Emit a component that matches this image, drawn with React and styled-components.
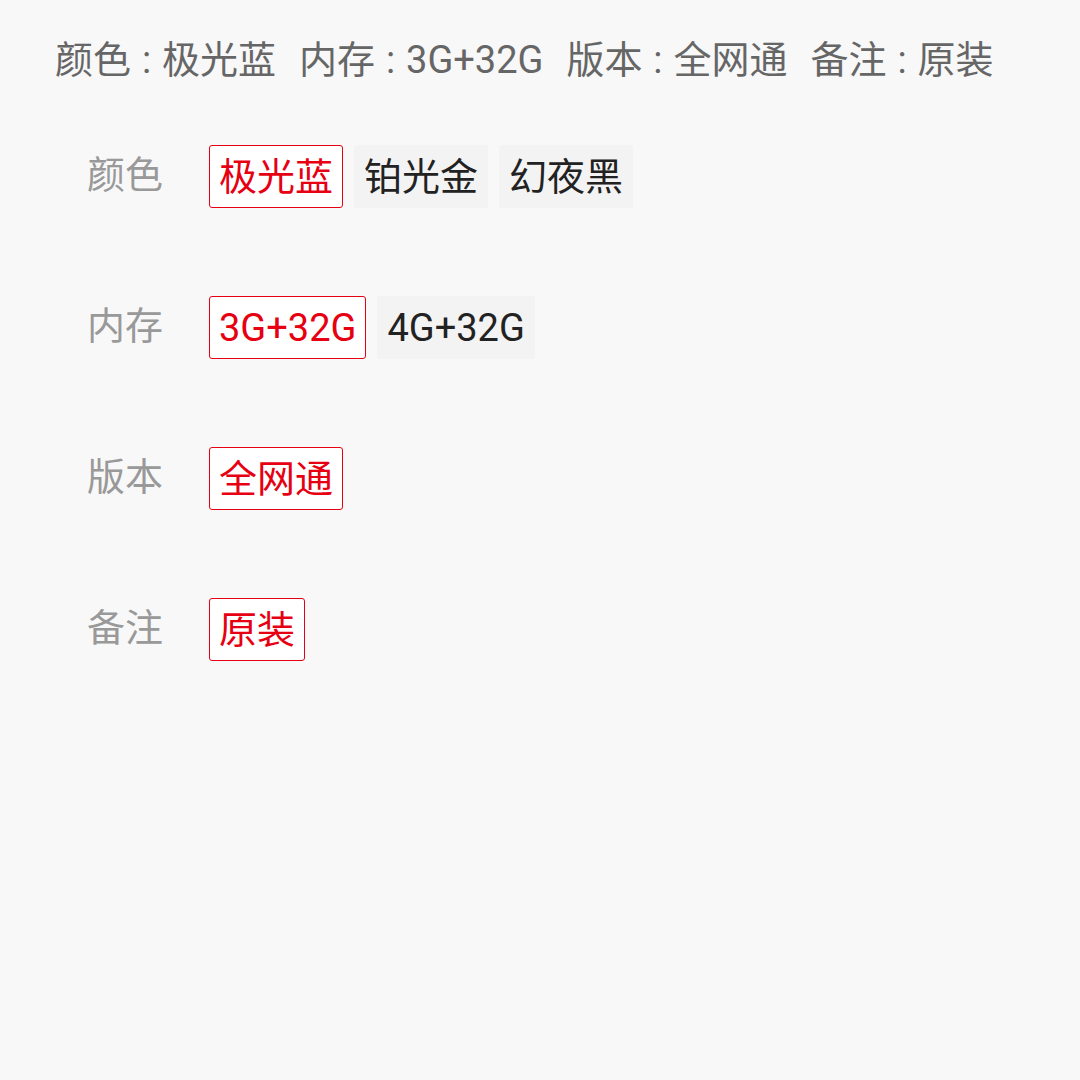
import React, { useState } from 'react';
import styled, { createGlobalStyle } from 'styled-components';

const GlobalStyle = createGlobalStyle`
  html, body {
    margin: 0;
    padding: 0;
    background: #f8f8f8;
  }
  body {
    font-family: Roboto, "Noto Sans CJK SC", "Noto Sans", sans-serif;
  }
`;

const Page = styled.div`
  width: 1080px;
  height: 1080px;
  box-sizing: border-box;
  background: #f8f8f8;
  padding: 37px 0 0 55px;
`;

const Summary = styled.div`
  display: flex;
  gap: 23px;
  font-size: 38px;
  line-height: 46px;
  color: #666;
  white-space: nowrap;
`;

const Colon = styled.span`
  display: inline-block;
  width: 31px;
  text-align: center;
`;

const Options = styled.div`
  display: flex;
  flex-direction: column;
  gap: 88px;
  margin-top: 62px;
  padding-left: 32px;
`;

const Row = styled.div`
  display: flex;
  align-items: center;
`;

const Label = styled.div`
  width: 122px;
  font-size: 38px;
  line-height: 46px;
  color: #999;
  margin-top: -3px;
`;

const Chips = styled.div`
  display: flex;
  gap: 11px;
`;

const Chip = styled.button`
  box-sizing: border-box;
  height: 63px;
  padding: 0 9px;
  font-family: inherit;
  font-size: 38px;
  line-height: 46px;
  border-radius: 3px;
  border: 1px solid ${p => (p.$active ? '#e60012' : 'transparent')};
  background: ${p => (p.$active ? '#fff' : '#f3f3f3')};
  color: ${p => (p.$active ? '#e60012' : '#222')};
  cursor: pointer;
`;

const specs = [
  { name: '颜色', values: ['极光蓝', '铂光金', '幻夜黑'] },
  { name: '内存', values: ['3G+32G', '4G+32G'] },
  { name: '版本', values: ['全网通'] },
  { name: '备注', values: ['原装'] },
];

export default function App() {
  const [picked, setPicked] = useState(specs.map(s => s.values[0]));

  const pick = (i, v) => setPicked(prev => prev.map((p, j) => (j === i ? v : p)));

  return (
    <Page>
      <GlobalStyle />
      <Summary>
        {specs.map((s, i) => (
          <span key={s.name}>
            {s.name}<Colon>:</Colon>{picked[i]}
          </span>
        ))}
      </Summary>
      <Options>
        {specs.map((s, i) => (
          <Row key={s.name}>
            <Label>{s.name}</Label>
            <Chips>
              {s.values.map(v => (
                <Chip key={v} $active={picked[i] === v} onClick={() => pick(i, v)}>
                  {v}
                </Chip>
              ))}
            </Chips>
          </Row>
        ))}
      </Options>
    </Page>
  );
}
